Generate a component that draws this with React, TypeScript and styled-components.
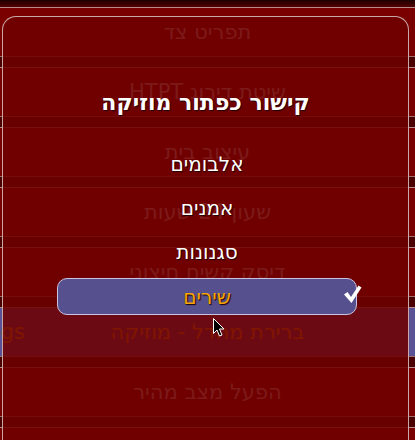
import React from 'react';
import styled, { createGlobalStyle } from 'styled-components';

const GlobalStyle = createGlobalStyle`
  html, body {
    margin: 0;
    padding: 0;
    background: #700000;
  }
  body {
    font-family: "DejaVu Sans", "Noto Sans", sans-serif;
  }
`;

const Screen = styled.div`
  position: relative;
  width: 415px;
  height: 440px;
  overflow: hidden;
  background: #4a0000;
  direction: rtl;
`;

const TopBar = styled.div`
  height: 7px;
  background: linear-gradient(to bottom, #1e0000, #520000);
`;

const MenuList = styled.div`
  display: flex;
  flex-direction: column;
  gap: 10px;
`;

const MenuRow = styled.div<{ $active?: boolean }>`
  position: relative;
  height: 48px;
  flex-shrink: 0;
  border-top: 1px solid #b48c8c;
  border-bottom: 1px solid #9c6c6c;
  background: ${(p) => (p.$active ? '#5a5294' : '#7a0000')};
  display: flex;
  align-items: center;
  justify-content: center;
  font-size: 21px;
  color: ${(p) => (p.$active ? '#f5a000' : '#d8c4c4')};
  overflow: hidden;
`;

const RowValue = styled.span`
  position: absolute;
  right: calc(100% - 25px);
  direction: ltr;
  white-space: nowrap;
`;

const Popup = styled.div`
  position: absolute;
  left: 2px;
  top: 16px;
  width: 405px;
  height: 408px;
  border: 1px solid rgba(214, 184, 184, 0.9);
  border-radius: 14px;
  background: rgba(110, 0, 0, 0.87);
  display: flex;
  flex-direction: column;
  align-items: center;
  padding-top: 71px;
  box-sizing: content-box;
`;

const Title = styled.div`
  height: 30px;
  line-height: 30px;
  font-size: 22px;
  font-weight: bold;
  color: #ffffff;
  text-shadow: 1px 1px 1px #1a0000;
  margin-bottom: 24px;
`;

const Options = styled.div`
  display: flex;
  flex-direction: column;
  width: 300px;
  margin-left: 3px;
`;

const Option = styled.div<{ $selected?: boolean }>`
  position: relative;
  height: ${(p) => (p.$selected ? '35px' : '44px')};
  margin: ${(p) => (p.$selected ? '4px 0 3px' : '0')};
  border: ${(p) => (p.$selected ? '1px solid #cac2e2' : 'none')};
  border-radius: 10px;
  background: ${(p) => (p.$selected ? '#57508e' : 'transparent')};
  display: flex;
  align-items: center;
  justify-content: center;
  font-size: 20px;
  color: ${(p) => (p.$selected ? '#f7a400' : '#ffffff')};
  text-shadow: 1px 1px 1px #1a0000;
`;

const Check = styled.svg`
  position: absolute;
  left: 285px;
  top: 6px;
`;

const Cursor = styled.svg`
  position: absolute;
  left: 213px;
  top: 318px;
`;

const rows = [
  'תפריט צד',
  'שיטת דירוג HTPT',
  'עיצוב בית',
  'שעון 24 שעות',
  'דיסק קשיח חיצוני',
  'ברירת מחדל - מוזיקה',
  'הפעל מצב מהיר',
  '',
];

const options = ['אלבומים', 'אמנים', 'סגנונות', 'שירים'];

export default function App() {
  return (
    <>
      <GlobalStyle />
      <Screen>
        <TopBar />
        <MenuList>
          {rows.map((r, i) => (
            <MenuRow key={i} $active={i === 5}>
              {r}
              {i === 5 && <RowValue>Songs</RowValue>}
            </MenuRow>
          ))}
        </MenuList>
        <Popup>
          <Title>קישור כפתור מוזיקה</Title>
          <Options>
            {options.map((o, i) => (
              <Option key={o} $selected={i === 3}>
                {o}
                {i === 3 && (
                  <Check width="19" height="19" viewBox="0 0 19 19">
                    <path
                      d="M1 9.5 L4.5 7 L8 12 L15.5 0.5 L18.5 2.5 L8.5 18 Z"
                      fill="#ffffff"
                    />
                  </Check>
                )}
              </Option>
            ))}
          </Options>
        </Popup>
        <Cursor width="12" height="19" viewBox="0 0 12 19">
          <path
            d="M0.5 0.5 L0.5 15.5 L4 12 L6.5 18 L9 17 L6.5 11 L11 11 Z"
            fill="#000"
            stroke="#fff"
            strokeWidth="1"
          />
        </Cursor>
      </Screen>
    </>
  );
}
